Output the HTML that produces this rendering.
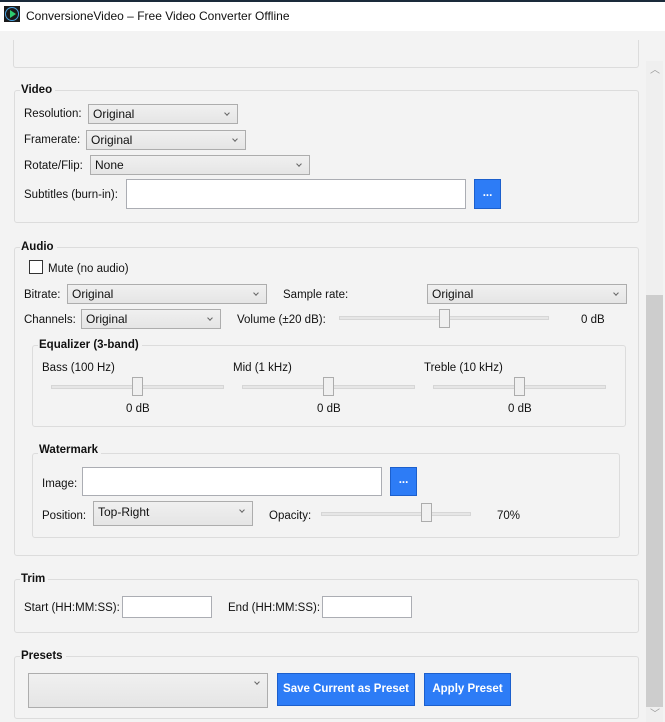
<!DOCTYPE html>
<html><head><meta charset="utf-8"><style>
*{box-sizing:border-box;margin:0;padding:0}
body{width:665px;height:722px;overflow:hidden;background:#f3f3f3;font-family:"Liberation Sans",sans-serif;font-size:11.5px;color:#111;position:relative}
.a{position:absolute}
.t{position:absolute;white-space:nowrap;line-height:14px}
.g{position:absolute;border:1px solid #dcdcdc;border-radius:3px}
.lg{position:absolute;background:#f3f3f3;font-weight:bold;padding:0 3px 0 1px;line-height:14px;font-size:11.5px}
.cb{position:absolute;border:1px solid #adadad;background:linear-gradient(#f0f0f0,#e5e5e5);padding-left:4px;line-height:18px;font-size:12px}
.cb:after{content:"";position:absolute;right:8px;top:6px;width:3px;height:3px;border-right:1px solid #666;border-bottom:1px solid #666;transform:rotate(45deg)}
.tb{position:absolute;border:1px solid #abadb3;background:#fff}
.btn{position:absolute;background:#2d7cf6;border:1px solid #1c5fcc;color:#fff;font-weight:bold;text-align:center;font-size:11.5px}
.tr{position:absolute;height:4px;background:#e6e6e6;border:1px solid #d6d6d6}
.th{position:absolute;width:11px;height:19px;background:#f0f0f0;border:1px solid #acacac}
</style></head><body>
<div class="a" style="left:0;top:0;width:665px;height:31px;background:#fff;border-top:2px solid #1a2a3a"></div>
<div class="a" style="left:4px;top:6px;width:16px;height:16px;background:#1a1a1a"></div>
<div class="a" style="left:5px;top:7px;width:14px;height:14px;border:1.5px solid #4aa3e0;border-radius:50%"></div>
<div class="a" style="left:10px;top:10px;width:0;height:0;border-left:6px solid #2ecc71;border-top:4px solid transparent;border-bottom:4px solid transparent"></div>
<div class="t" style="left:26px;top:9px;font-size:12px">ConversioneVideo – Free Video Converter Offline</div>

<div class="a" style="left:646px;top:61px;width:17px;height:661px;background:#efefef"></div>
<div class="a" style="left:646px;top:295px;width:17px;height:412px;background:#cdcdcd"></div>
<div class="t" style="left:650px;top:64px;color:#999;font-size:10px">︿</div>
<div class="t" style="left:650px;top:708px;color:#999;font-size:10px">﹀</div>

<div class="g" style="left:13px;top:40px;width:626px;height:28px;border-top:none;border-radius:0 0 3px 3px"></div>

<div class="g" style="left:14px;top:90px;width:625px;height:133px"></div>
<div class="lg" style="left:20px;top:83px">Video</div>
<div class="t" style="left:24px;top:107px">Resolution:</div>
<div class="cb" style="left:88px;top:104px;width:150px;height:20px">Original</div>
<div class="t" style="left:24px;top:133px">Framerate:</div>
<div class="cb" style="left:86px;top:130px;width:160px;height:20px">Original</div>
<div class="t" style="left:24px;top:159px">Rotate/Flip:</div>
<div class="cb" style="left:90px;top:155px;width:220px;height:20px">None</div>
<div class="t" style="left:24px;top:188px">Subtitles (burn-in):</div>
<div class="tb" style="left:126px;top:179px;width:340px;height:30px"></div>
<div class="btn" style="left:474px;top:179px;width:27px;height:30px;line-height:26px">...</div>

<div class="g" style="left:14px;top:247px;width:625px;height:309px"></div>
<div class="lg" style="left:20px;top:240px">Audio</div>
<div class="a" style="left:29px;top:260px;width:14px;height:14px;border:1px solid #333;background:#fff"></div>
<div class="t" style="left:48px;top:262px">Mute (no audio)</div>
<div class="t" style="left:24px;top:288px">Bitrate:</div>
<div class="cb" style="left:67px;top:284px;width:200px;height:20px">Original</div>
<div class="t" style="left:283px;top:288px">Sample rate:</div>
<div class="cb" style="left:427px;top:284px;width:200px;height:20px">Original</div>
<div class="t" style="left:24px;top:313px">Channels:</div>
<div class="cb" style="left:81px;top:309px;width:140px;height:20px">Original</div>
<div class="t" style="left:237px;top:313px">Volume (±20 dB):</div>
<div class="tr" style="left:339px;top:316px;width:210px"></div>
<div class="th" style="left:439px;top:309px"></div>
<div class="t" style="left:581px;top:313px">0 dB</div>

<div class="g" style="left:32px;top:345px;width:594px;height:82px"></div>
<div class="lg" style="left:38px;top:338px">Equalizer (3-band)</div>
<div class="t" style="left:42px;top:361px">Bass (100 Hz)</div>
<div class="t" style="left:233px;top:361px">Mid (1 kHz)</div>
<div class="t" style="left:424px;top:361px">Treble (10 kHz)</div>
<div class="tr" style="left:51px;top:385px;width:173px"></div>
<div class="tr" style="left:242px;top:385px;width:173px"></div>
<div class="tr" style="left:433px;top:385px;width:173px"></div>
<div class="th" style="left:132px;top:377px"></div>
<div class="th" style="left:323px;top:377px"></div>
<div class="th" style="left:514px;top:377px"></div>
<div class="t" style="left:126px;top:402px">0 dB</div>
<div class="t" style="left:317px;top:402px">0 dB</div>
<div class="t" style="left:508px;top:402px">0 dB</div>

<div class="g" style="left:32px;top:453px;width:588px;height:85px"></div>
<div class="lg" style="left:38px;top:443px">Watermark</div>
<div class="t" style="left:42px;top:477px">Image:</div>
<div class="tb" style="left:82px;top:467px;width:300px;height:29px"></div>
<div class="btn" style="left:390px;top:467px;width:27px;height:29px;line-height:25px">...</div>
<div class="t" style="left:42px;top:509px">Position:</div>
<div class="cb" style="left:93px;top:501px;width:160px;height:25px;line-height:20px">Top-Right</div>
<div class="t" style="left:269px;top:509px">Opacity:</div>
<div class="tr" style="left:321px;top:512px;width:150px"></div>
<div class="th" style="left:421px;top:503px"></div>
<div class="t" style="left:497px;top:509px">70%</div>

<div class="g" style="left:14px;top:579px;width:625px;height:54px"></div>
<div class="lg" style="left:20px;top:572px">Trim</div>
<div class="t" style="left:24px;top:601px">Start (HH:MM:SS):</div>
<div class="tb" style="left:122px;top:596px;width:90px;height:22px"></div>
<div class="t" style="left:228px;top:601px">End (HH:MM:SS):</div>
<div class="tb" style="left:322px;top:596px;width:90px;height:22px"></div>

<div class="g" style="left:14px;top:656px;width:625px;height:63px"></div>
<div class="lg" style="left:20px;top:649px">Presets</div>
<div class="cb" style="left:28px;top:673px;width:240px;height:35px"></div>
<div class="btn" style="left:277px;top:673px;width:138px;height:33px;line-height:31px">Save Current as Preset</div>
<div class="btn" style="left:424px;top:673px;width:87px;height:33px;line-height:31px">Apply Preset</div>
</body></html>
